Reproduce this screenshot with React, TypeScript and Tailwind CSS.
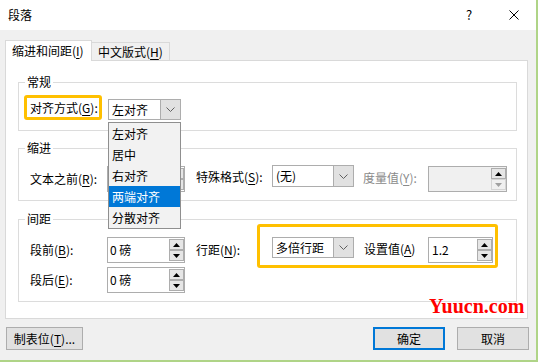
import type { ReactNode } from "react";

const U = ({ children }: { children: ReactNode }) => (
  <span className="underline underline-offset-2">{children}</span>
);

const Chevron = () => (
  <svg width="9" height="5" viewBox="0 0 9 5">
    <path d="M0.5 0.5 L4.5 4.5 L8.5 0.5" fill="none" stroke="#606060" strokeWidth="1" />
  </svg>
);

const Combo = ({ value, className }: { value: string; className: string }) => (
  <div className={`flex border border-[#adadad] bg-white ${className}`}>
    <div className="flex-1 whitespace-nowrap pl-[3px] leading-[19px]">{value}</div>
    <div className="flex w-[20px] items-center justify-center border-l border-[#adadad] bg-[#e1e1e1]">
      <Chevron />
    </div>
  </div>
);

const SpinBtn = ({ up, dim }: { up?: boolean; dim?: boolean }) => (
  <div
    className={`flex h-[11px] w-[15px] items-center justify-center border ${
      dim ? "border-[#d5d5d5] bg-[#f0f0f0]" : "border-[#adadad] bg-[#e6e6e6]"
    }`}
  >
    <svg width="7" height="4" viewBox="0 0 7 4">
      <polygon
        points={up ? "0,4 7,4 3.5,0" : "0,0 7,0 3.5,4"}
        fill={dim ? "#a0a0a0" : "#000"}
      />
    </svg>
  </div>
);

const Spin = ({
  value,
  className,
  disabled,
}: {
  value: string;
  className: string;
  disabled?: boolean;
}) => (
  <div
    className={`flex h-[26px] border border-[#adadad] ${
      disabled ? "bg-[#f0f0f0]" : "bg-white"
    } ${className}`}
  >
    <div className="flex-1 whitespace-nowrap pl-[2px] leading-[24px]">{value}</div>
    <div className="flex flex-col py-[1px]">
      <SpinBtn up />
      <SpinBtn dim={disabled} />
    </div>
  </div>
);

const options = ["左对齐", "居中", "右对齐", "两端对齐", "分散对齐"];

export default function App() {
  return (
    <div className="relative flex h-[362px] w-[538px] flex-col overflow-hidden border-r-2 border-b-2 border-[#afd487] bg-[#f0f0f0] font-['Noto_Sans_CJK_SC',sans-serif] text-[12px] leading-[16px] text-black">
      {/* title bar */}
      <div className="flex h-[30px] shrink-0 items-center bg-white pl-[8px] pr-[17px]">
        <span>段落</span>
        <span className="ml-auto w-[6px] text-center text-[13px]">?</span>
        <svg className="ml-[37px]" width="10" height="10" viewBox="0 0 10 10">
          <path d="M0.5 0.5 L9.5 9.5 M9.5 0.5 L0.5 9.5" stroke="#000" strokeWidth="1" />
        </svg>
      </div>

      {/* tabs */}
      <div className="ml-[5px] mt-[10px] flex h-[20px] items-end">
        <div className="relative z-10 -mb-px h-[21px] w-[87px] whitespace-nowrap border border-b-0 border-[#d9d9d9] bg-white pl-[6px] pt-[2px]">
          缩进和间距(<U>I</U>)
        </div>
        <div className="h-[18px] w-[78px] whitespace-nowrap border border-b-0 border-l-0 border-[#d9d9d9] pl-[6px] pt-[1px]">
          中文版式(<U>H</U>)
        </div>
      </div>

      {/* panel */}
      <div className="ml-[5px] h-[259px] w-[523px] shrink-0 border border-[#d9d9d9] bg-white pl-[12px] pr-[10px] pt-[13px]">
        {/* 常规 */}
        <fieldset className="border border-[#dcdcdc]">
          <legend className="ml-[6px] px-[2px] leading-[16px]">常规</legend>
          <div className="flex items-start pl-[5px] pt-[5px] pb-[10px]">
            <div className="flex h-[25px] w-[78px] items-center whitespace-nowrap rounded-[3px] border-[3px] border-[#ffc000] pl-[3px]">
              对齐方式(<U>G</U>):
            </div>
            <div className="relative ml-[6px] mt-[4px]">
              <Combo value="左对齐" className="h-[21px] w-[73px]" />
              <div className="absolute left-0 top-[23px] z-20 w-[73px] border border-[#8f8f8f] bg-[#f2f2f2]">
                {options.map((o) => (
                  <div
                    key={o}
                    className={`h-[21px] pl-[3px] leading-[21px] ${
                      o === "两端对齐" ? "bg-[#0078d7] text-white" : ""
                    }`}
                  >
                    {o}
                  </div>
                ))}
              </div>
            </div>
          </div>
        </fieldset>

        {/* 缩进 */}
        <fieldset className="mt-[9px] border border-[#dcdcdc]">
          <legend className="ml-[6px] px-[2px] leading-[16px]">缩进</legend>
          <div className="flex items-start pl-[11px] pt-[9px] pb-[8px]">
            <span className="mt-[6px] w-[77px] whitespace-nowrap">
              文本之前(<U>R</U>):
            </span>
            <Spin value="" className="mt-[1px] w-[78px]" />
            <span className="ml-[11px] mt-[4px] w-[76px] whitespace-nowrap">
              特殊格式(<U>S</U>):
            </span>
            <Combo value="(无)" className="h-[22px] w-[82px]" />
            <span className="ml-[9px] mt-[5px] w-[65px] whitespace-nowrap text-[#8a8a8a]">
              度量值(<U>Y</U>):
            </span>
            <Spin value="" disabled className="mt-[1px] w-[79px]" />
          </div>
        </fieldset>

        {/* 间距 */}
        <fieldset className="mt-[10px] border border-[#dcdcdc]">
          <legend className="ml-[6px] px-[2px] leading-[16px]">间距</legend>
          <div className="pl-[11px] pb-[8px]">
            <div className="flex items-start">
              <span className="mt-[15px] w-[77px] whitespace-nowrap">
                段前(<U>B</U>):
              </span>
              <Spin value="0 磅" className="mt-[10px] w-[78px]" />
              <span className="ml-[11px] mt-[15px] w-[61px] whitespace-nowrap">
                行距(<U>N</U>):
              </span>
              <div className="-mb-[5px] -mt-[3px] flex h-[44px] w-[241px] items-start rounded-[3px] border-[3px] border-[#ffc000] pl-[12px]">
                <Combo value="多倍行距" className="mt-[10px] h-[21px] w-[82px]" />
                <span className="ml-[10px] mt-[14px] w-[64px] whitespace-nowrap">
                  设置值(<U>A</U>)
                </span>
                <Spin value=" 1.2" className="mt-[10px] w-[65px] pl-[1px]" />
              </div>
            </div>
            <div className="flex items-start">
              <span className="mt-[9px] w-[77px] whitespace-nowrap">
                段后(<U>E</U>):
              </span>
              <Spin value="0 磅" className="mt-[4px] w-[78px]" />
            </div>
          </div>
        </fieldset>
      </div>

      {/* buttons */}
      <div className="mt-[8px] flex pl-[6px] pr-[7px]">
        <button className="h-[23px] w-[77px] whitespace-nowrap border border-[#adadad] bg-[#e1e1e1]">
          制表位(<U>T</U>)...
        </button>
        <button className="ml-auto h-[23px] w-[72px] border-2 border-[#0078d7] bg-[#e1e1e1]">
          确定
        </button>
        <button className="ml-[12px] h-[23px] w-[72px] border border-[#adadad] bg-[#e1e1e1]">
          取消
        </button>
      </div>

      {/* watermark */}
      <div className="absolute left-[429px] top-[296px] font-['Liberation_Serif',serif] text-[20px] font-bold leading-[20px] text-[#ff0000]">
        Yuucn.com
      </div>
    </div>
  );
}
